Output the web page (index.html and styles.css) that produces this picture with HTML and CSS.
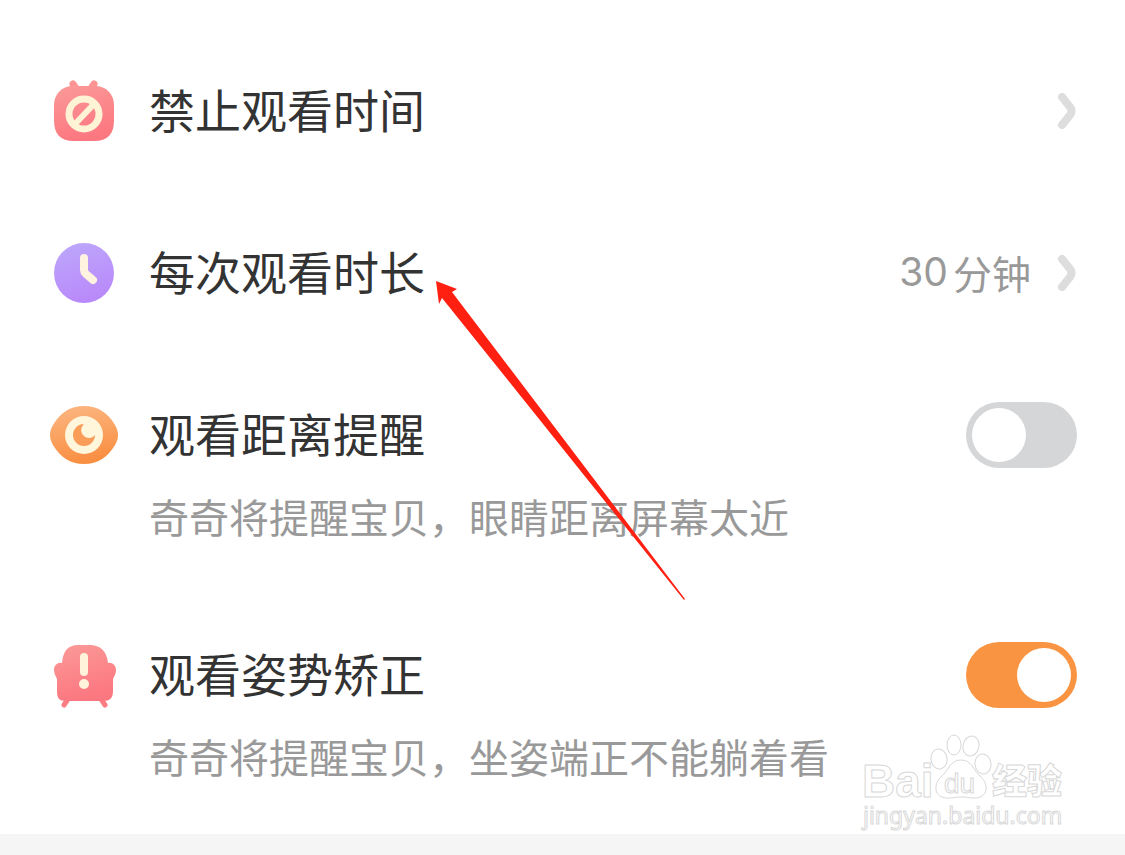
FILE: index.html
```html
<!DOCTYPE html>
<html lang="zh-CN">
<head>
    <meta charset="UTF-8">
    <meta name="viewport" content="width=device-width, initial-scale=1.0">
    <title>观看设置</title>
    <link rel="stylesheet" href="styles.css">
</head>
<body>
    <main class="settings">
        <button type="button" class="setting-row">
            <svg class="setting-icon" viewBox="0 0 72 66" aria-hidden="true">
                <defs>
                    <linearGradient id="pink" x1="0" y1="0" x2="0.3" y2="1">
                        <stop offset="0" stop-color="#fb9a98"/>
                        <stop offset="1" stop-color="#fc7880"/>
                    </linearGradient>
                </defs>
                <path d="M29 12L25 6M42 12L46 6" stroke="#fb9492" stroke-width="7" stroke-linecap="round"/>
                <path d="M25 8H47C58 8 66 16 66 27V42C66 56 60 63 46 63H26C12 63 6 56 6 42V27C6 16 14 8 25 8Z" fill="url(#pink)"/>
                <circle cx="36" cy="36" r="15" fill="none" stroke="#fff3d6" stroke-width="7"/>
                <path d="M27 46L46 26" stroke="#fff3d6" stroke-width="6"/>
            </svg>
            <span class="setting-title">禁止观看时间</span>
            <svg class="chevron" viewBox="0 0 20 36" aria-hidden="true">
                <path d="M5 4L13 14Q16 18 13 22L5 32"/>
            </svg>
        </button>

        <button type="button" class="setting-row">
            <svg class="setting-icon" viewBox="0 0 72 66" aria-hidden="true">
                <defs>
                    <linearGradient id="purple" x1="0" y1="0" x2="0.3" y2="1">
                        <stop offset="0" stop-color="#bda8fb"/>
                        <stop offset="1" stop-color="#b98afa"/>
                    </linearGradient>
                </defs>
                <circle cx="36" cy="33" r="30" fill="url(#purple)"/>
                <path d="M36 18V30Q36 32 38 34L45 40" fill="none" stroke="#fff3e0" stroke-width="8" stroke-linecap="round" stroke-linejoin="round"/>
            </svg>
            <span class="setting-title">每次观看时长</span>
            <span class="setting-value"><span class="number">30</span>分钟</span>
            <svg class="chevron" viewBox="0 0 20 36" aria-hidden="true">
                <path d="M5 4L13 14Q16 18 13 22L5 32"/>
            </svg>
        </button>

        <label class="setting-row">
            <svg class="setting-icon" viewBox="0 0 72 66" aria-hidden="true">
                <defs>
                    <linearGradient id="orange" x1="0" y1="0" x2="0.2" y2="1">
                        <stop offset="0" stop-color="#fcb883"/>
                        <stop offset="1" stop-color="#f98f43"/>
                    </linearGradient>
                </defs>
                <path d="M36 4C50 4 60 11 67 23C71 30 71 36 67 43C60 55 50 62 36 62C22 62 12 55 5 43C1 36 1 30 5 23C12 11 22 4 36 4Z" fill="url(#orange)"/>
                <circle cx="36" cy="33" r="19" fill="#fff6dc"/>
                <path d="M36 22A11 11 0 1 0 47 33C44 37 38 37 35 33C32 29 33 25 36 22Z" fill="#fa9d59"/>
            </svg>
            <span class="setting-title">观看距离提醒</span>
            <input type="checkbox" class="switch">
            <span class="setting-desc">奇奇将提醒宝贝，眼睛距离屏幕太近</span>
        </label>

        <label class="setting-row">
            <svg class="setting-icon" viewBox="0 0 72 66" aria-hidden="true">
                <path d="M20 57L16 63M53 57L57 63" stroke="#fc7d84" stroke-width="5" stroke-linecap="round"/>
                <path d="M30 3H42C52 3 59 9 60 21C64 20 68 23 68 28C68 32 66 34 65 37V49C65 56 62 59 55 59H18C11 59 9 56 9 49V37C8 34 6 32 6 28C6 23 10 20 14 21C15 9 20 3 30 3Z" fill="url(#pink)"/>
                <path d="M36 15V30" stroke="#fff3dc" stroke-width="8" stroke-linecap="round"/>
                <circle cx="36" cy="42" r="5" fill="#fff3dc"/>
            </svg>
            <span class="setting-title">观看姿势矫正</span>
            <input type="checkbox" class="switch" checked>
            <span class="setting-desc">奇奇将提醒宝贝，坐姿端正不能躺着看</span>
        </label>

        <svg class="pointer" viewBox="0 0 252 322" aria-hidden="true">
            <path d="M1 1L22 9L17 12L250 319L249 320L7 18L4 24Z"/>
        </svg>

        <svg class="watermark" viewBox="0 0 210 100">
            <ellipse cx="79" cy="27" rx="8" ry="10" transform="rotate(-8 79 27)"/>
            <ellipse cx="94" cy="13" rx="7" ry="10"/>
            <ellipse cx="111" cy="14" rx="8" ry="10" transform="rotate(14 111 14)"/>
            <ellipse cx="123" cy="32" rx="8" ry="10" transform="rotate(-8 123 32)"/>
            <text x="2" y="65" class="mark-latin">Bai</text>
            <path d="M101 28C112 28 113 38 121 45C129 52 128 66 115 66C108 66 107 65 101 65C95 65 94 66 87 66C74 66 73 52 81 45C89 38 90 28 101 28Z"/>
            <text x="84" y="61" class="mark-du">du</text>
            <text x="132" y="62" class="mark-cjk">经验</text>
            <text x="3" y="92" class="mark-url">jingyan.baidu.com</text>
        </svg>
    </main>
</body>
</html>
```

FILE: styles.css
```css
:root {
    --text-color: #333333;
    --muted-color: #999999;
    --accent-color: #f99442;
    --track-color: #d5d6d8;
    --page-bg: #f5f5f5;
}

* {
    margin: 0;
    padding: 0;
    box-sizing: border-box;
}

body {
    font-family: 'Noto Sans CJK SC', sans-serif;
    background-color: var(--page-bg);
    color: var(--text-color);
}

.settings {
    position: relative;
    padding-top: 30px;
    background-color: #ffffff;
}

.setting-row {
    display: flex;
    flex-wrap: wrap;
    align-items: center;
    width: 100%;
    padding: 48px;
    border: none;
    background: none;
    color: inherit;
    font: inherit;
    text-align: left;
    cursor: pointer;
}

.setting-icon {
    width: 72px;
    height: 66px;
    margin-right: 29px;
}

.setting-title {
    flex: 1;
    padding-bottom: 6px;
    font-size: 46px;
    line-height: 56px;
}

.setting-value {
    display: flex;
    align-items: center;
    margin-right: 26px;
    padding-bottom: 2px;
    font-size: 39px;
    line-height: 56px;
    color: var(--muted-color);
}

.number {
    margin-right: 5px;
    font-family: Inter, sans-serif;
}

.setting-desc {
    width: 100%;
    margin-top: 22px;
    padding: 0 0 4px 101px;
    font-size: 40px;
    line-height: 52px;
    color: var(--muted-color);
}

.chevron {
    width: 20px;
    height: 36px;
    fill: none;
    stroke: #dddddd;
    stroke-width: 8px;
    stroke-linecap: round;
}

/* Toggle switch */
.switch {
    display: flex;
    align-items: center;
    width: 111px;
    height: 66px;
    padding: 6px;
    border-radius: 33px;
    background-color: var(--track-color);
    appearance: none;
    cursor: pointer;
}

.switch::before {
    content: '';
    width: 54px;
    height: 54px;
    border-radius: 50%;
    background-color: #ffffff;
}

.switch:checked {
    justify-content: flex-end;
    background-color: var(--accent-color);
}

/* Red arrow over the rows */
.pointer {
    position: absolute;
    top: 280px;
    left: 435px;
    width: 252px;
    height: 322px;
    fill: #ff2012;
    pointer-events: none;
}

.watermark {
    position: absolute;
    right: 55px;
    bottom: 2px;
    width: 210px;
    height: 100px;
    fill: #ffffff;
    stroke: #d8d8d8;
    stroke-width: 1px;
    pointer-events: none;
}

.mark-latin {
    font: bold 46px 'Liberation Sans', sans-serif;
}

.mark-du {
    font: 28px 'Liberation Sans', sans-serif;
}

.mark-cjk {
    font: 900 35px 'Noto Sans CJK SC', sans-serif;
}

.mark-url {
    font: 23px 'Noto Sans', sans-serif;
}
```
